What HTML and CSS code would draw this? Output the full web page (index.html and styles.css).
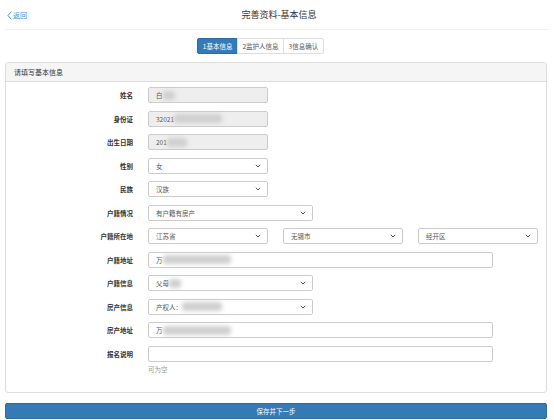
FILE: index.html
```html
<!DOCTYPE html>
<html>
<head>
<meta charset="utf-8">
<link rel="stylesheet" href="styles.css">
</head>
<body>
<div class="page">
  <header class="topbar">
    <a class="back"><svg class="back-ico" width="5" height="9" viewBox="0 0 5 9"><path d="M4.3 0.6 L1 4.5 L4.3 8.4" fill="none" stroke="#3a8ee6" stroke-width="0.9"/></svg>返回</a>
    <div class="title">完善资料-基本信息</div>
  </header>

  <div class="steps">
    <div class="step active">1基本信息</div>
    <div class="step">2监护人信息</div>
    <div class="step">3信息确认</div>
  </div>

  <section class="panel">
    <div class="panel-head">请填写基本信息</div>
    <div class="panel-body">
      <div class="row">
        <div class="label">姓名</div>
        <div class="field w-s disabled"><span>白</span><span class="blur blur-xs"></span></div>
      </div>
      <div class="row">
        <div class="label">身份证</div>
        <div class="field w-s disabled"><span>32021</span><span class="blur blur-m"></span></div>
      </div>
      <div class="row">
        <div class="label">出生日期</div>
        <div class="field w-s disabled"><span>201</span><span class="blur blur-s"></span></div>
      </div>
      <div class="row">
        <div class="label">性别</div>
        <div class="field w-s select"><span>女</span><svg class="chev" width="6" height="4" viewBox="0 0 6 4"><path d="M0.8 0.8 L3 3 L5.2 0.8" fill="none" stroke="#555" stroke-width="1"/></svg></div>
      </div>
      <div class="row">
        <div class="label">民族</div>
        <div class="field w-s select"><span>汉族</span><svg class="chev" width="6" height="4" viewBox="0 0 6 4"><path d="M0.8 0.8 L3 3 L5.2 0.8" fill="none" stroke="#555" stroke-width="1"/></svg></div>
      </div>
      <div class="row">
        <div class="label">户籍情况</div>
        <div class="field w-m select"><span>有户籍有房产</span><svg class="chev" width="6" height="4" viewBox="0 0 6 4"><path d="M0.8 0.8 L3 3 L5.2 0.8" fill="none" stroke="#555" stroke-width="1"/></svg></div>
      </div>
      <div class="row">
        <div class="label">户籍所在地</div>
        <div class="triple">
          <div class="field w-s select"><span>江苏省</span><svg class="chev" width="6" height="4" viewBox="0 0 6 4"><path d="M0.8 0.8 L3 3 L5.2 0.8" fill="none" stroke="#555" stroke-width="1"/></svg></div>
          <div class="field w-s select"><span>无锡市</span><svg class="chev" width="6" height="4" viewBox="0 0 6 4"><path d="M0.8 0.8 L3 3 L5.2 0.8" fill="none" stroke="#555" stroke-width="1"/></svg></div>
          <div class="field w-s select"><span>经开区</span><svg class="chev" width="6" height="4" viewBox="0 0 6 4"><path d="M0.8 0.8 L3 3 L5.2 0.8" fill="none" stroke="#555" stroke-width="1"/></svg></div>
        </div>
      </div>
      <div class="row">
        <div class="label">户籍地址</div>
        <div class="field w-l"><span>万</span><span class="blur blur-l"></span></div>
      </div>
      <div class="row">
        <div class="label">户籍信息</div>
        <div class="field w-m select"><span>父母</span><span class="blur blur-xs"></span><span class="grow"></span><svg class="chev" width="6" height="4" viewBox="0 0 6 4"><path d="M0.8 0.8 L3 3 L5.2 0.8" fill="none" stroke="#555" stroke-width="1"/></svg></div>
      </div>
      <div class="row">
        <div class="label">房产信息</div>
        <div class="field w-m select"><span>产权人：</span><span class="blur blur-m2"></span><span class="grow"></span><svg class="chev" width="6" height="4" viewBox="0 0 6 4"><path d="M0.8 0.8 L3 3 L5.2 0.8" fill="none" stroke="#555" stroke-width="1"/></svg></div>
      </div>
      <div class="row">
        <div class="label">房产地址</div>
        <div class="field w-l"><span>万</span><span class="blur blur-l"></span></div>
      </div>
      <div class="row">
        <div class="label">报名说明</div>
        <div class="field w-l"></div>
      </div>
      <div class="help">可为空</div>
    </div>
  </section>

  <button class="submit">保存并下一步</button>
</div>
</body>
</html>
```
FILE: styles.css
```css
* { box-sizing: border-box; }
html, body { margin: 0; padding: 0; background: #fff; }
body {
  font-family: "Noto Sans CJK SC", "Liberation Sans", sans-serif;
  color: #333;
  font-size: 7px;
  width: 554px;
  height: 420px;
  overflow: hidden;
}
.page { display: flex; flex-direction: column; }

.topbar {
  height: 30px;
  border-bottom: 1px solid #f0f0f0;
  margin: 0 5px;
  display: flex;
  align-items: center;
  justify-content: center;
  position: relative;
}
.back {
  position: absolute;
  left: 2px;
  top: 10px;
  display: flex;
  align-items: center;
  gap: 1px;
  color: #3a8ee6;
  font-size: 7px;
  line-height: 10px;
}
.back-ico { display: block; }
.title {
  font-size: 9px;
  color: #333;
  line-height: 12px;
  margin-left: 4px;
}

.steps {
  display: flex;
  justify-content: center;
  margin-top: 8px;
  margin-right: 33px;
  height: 16px;
}
.step {
  border: 1px solid #ddd;
  margin-left: -1px;
  padding: 0 4.5px;
  line-height: 14px;
  font-size: 6.5px;
  color: #555;
  background: #fff;
}
.step:first-child { border-radius: 2px 0 0 2px; margin-left: 0; }
.step:last-child { border-radius: 0 2px 2px 0; }
.step.active { background: #337ab7; border-color: #2e6da4; color: #fff; }

.panel {
  margin: 8px 7px 0 5px;
  border: 1px solid #ddd;
  border-radius: 3px;
  height: 331px;
}
.panel-head {
  height: 19px;
  background: #f5f5f5;
  border-bottom: 1px solid #ddd;
  padding-left: 8px;
  line-height: 18px;
  font-size: 7px;
  color: #333;
}
.panel-body {
  padding-top: 5px;
  display: flex;
  flex-direction: column;
  gap: 7.5px;
}
.row {
  display: flex;
  align-items: center;
  height: 16px;
}
.label {
  width: 127px;
  margin-right: 15px;
  text-align: right;
  font-weight: bold;
  font-size: 6.5px;
  color: #333;
}
.field {
  height: 16px;
  border: 1px solid #ccc;
  border-radius: 2px;
  background: #fff;
  display: flex;
  align-items: center;
  padding: 0 6px 0 7px;
  color: #555;
  font-size: 6.5px;
}
.field.disabled { background: #eee; }
.field.select { justify-content: space-between; }
.w-s { width: 120px; }
.w-m { width: 165px; }
.w-l { width: 345px; }
.grow { flex: 1; }
.triple { display: flex; gap: 15px; }
.chev { display: block; flex: none; }

.blur {
  display: inline-block;
  height: 9px;
  background: #cfcfcf;
  filter: blur(2px);
  border-radius: 3px;
}
.blur-xs { width: 12px; }
.blur-s { width: 20px; }
.blur-m { width: 48px; }
.blur-m2 { width: 40px; }
.blur-l { width: 68px; }

.help {
  margin-left: 142px;
  margin-top: -4px;
  font-size: 6.5px;
  color: #999;
  line-height: 8px;
}

.submit {
  margin: 10px 7px 0 5px;
  height: 16px;
  background: #337ab7;
  border: 1px solid #2e6da4;
  border-radius: 2px;
  color: #fff;
  font-family: "Noto Sans CJK SC", "Liberation Sans", sans-serif;
  font-size: 6.5px;
  padding: 0;
}
```
